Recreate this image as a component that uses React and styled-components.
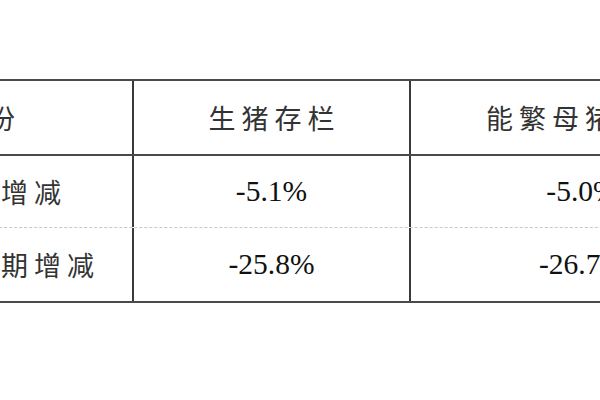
import React from "react";
import styled, { createGlobalStyle } from "styled-components";

const GlobalStyle = createGlobalStyle`
  html, body {
    margin: 0;
    padding: 0;
    background: #fff;
    overflow: hidden;
  }
`;

const Page = styled.div`
  width: 600px;
  height: 400px;
  overflow: hidden;
  padding-top: 79px;
  box-sizing: border-box;
`;

const Table = styled.div`
  width: 889px;
  margin-left: -136px;
  border-top: 2px solid #4a4a4a;
  border-bottom: 2px solid #4a4a4a;
`;

const Row = styled.div`
  display: grid;
  grid-template-columns: 268px 277px 344px;
  height: ${(p) => p.$height}px;
  border-bottom: ${(p) => p.$divider || "none"};
`;

const Cell = styled.div`
  display: flex;
  align-items: center;
  justify-content: center;
  padding-right: ${(p) => p.$shift || 0}px;
  border-left: ${(p) => (p.$first ? "none" : "2px solid #3a3a3a")};
  white-space: nowrap;
  overflow: hidden;
`;

const Label = styled.span`
  font-family: "Noto Sans CJK SC", "Noto Sans", sans-serif;
  font-size: 27px;
  font-weight: 400;
  letter-spacing: 6px;
  padding-left: 6px;
  color: #333;
`;

const Value = styled.span`
  font-family: "Liberation Serif", "Times New Roman", serif;
  font-size: 29.5px;
  color: #111;
`;

const rows = [
  { label: "环比增减", values: ["-5.1%", "-5.0%"], height: 71, divider: "1px dashed #c8c8c8" },
  { label: "上年同期增减", values: ["-25.8%", "-26.7%"], height: 73 },
];

export default function App() {
  return (
    <Page>
      <GlobalStyle />
      <Table>
        <Row $height={73} $divider="2px solid #4a4a4a">
          <Cell $first $shift={26}>
            <Label>月份</Label>
          </Cell>
          <Cell>
            <Label>生猪存栏</Label>
          </Cell>
          <Cell>
            <Label>能繁母猪存栏</Label>
          </Cell>
        </Row>
        {rows.map((r) => (
          <Row key={r.label} $height={r.height} $divider={r.divider}>
            <Cell $first>
              <Label>{r.label}</Label>
            </Cell>
            {r.values.map((v) => (
              <Cell key={v}>
                <Value>{v}</Value>
              </Cell>
            ))}
          </Row>
        ))}
      </Table>
    </Page>
  );
}
